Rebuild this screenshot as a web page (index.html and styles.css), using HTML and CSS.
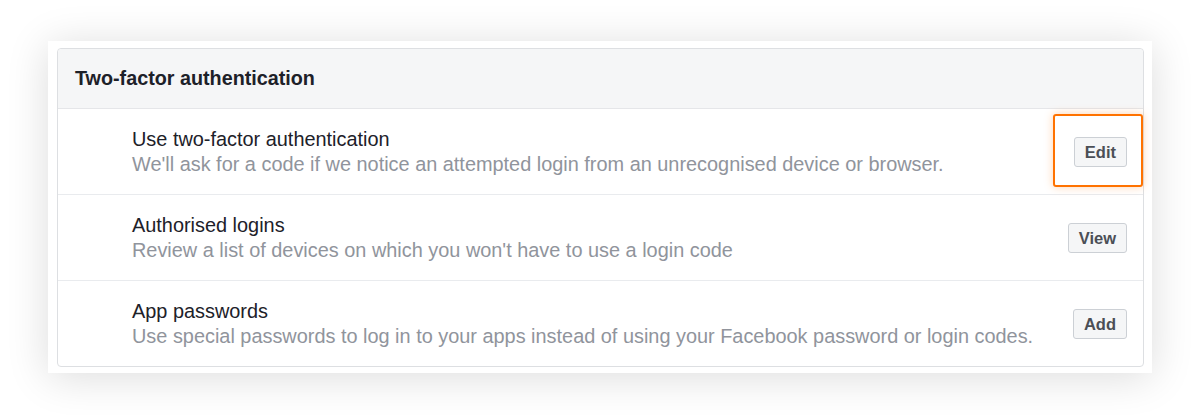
FILE: index.html
```html
<!DOCTYPE html>
<html lang="en">
<head>
<meta charset="utf-8">
<title>Two-factor authentication</title>
<link rel="stylesheet" href="styles.css">
</head>
<body>
<div class="page">
  <div class="card">
    <div class="panel">
      <div class="panel-header">Two-factor authentication</div>
      <div class="row highlighted">
        <div class="text">
          <div class="title">Use two-factor authentication</div>
          <div class="desc">We'll ask for a code if we notice an attempted login from an unrecognised device or browser.</div>
        </div>
        <button class="btn">Edit</button>
        <div class="focus-ring"></div>
      </div>
      <div class="row">
        <div class="text">
          <div class="title">Authorised logins</div>
          <div class="desc">Review a list of devices on which you won't have to use a login code</div>
        </div>
        <button class="btn">View</button>
      </div>
      <div class="row">
        <div class="text">
          <div class="title">App passwords</div>
          <div class="desc">Use special passwords to log in to your apps instead of using your Facebook password or login codes.</div>
        </div>
        <button class="btn">Add</button>
      </div>
    </div>
  </div>
</div>
</body>
</html>
```

FILE: styles.css
```css
* { box-sizing: border-box; }
html, body { margin: 0; padding: 0; background: #ffffff; }
body {
  font-family: "Liberation Sans", Arial, sans-serif;
  width: 1200px;
  height: 415px;
  overflow: hidden;
}
.page {
  padding: 41px 48px 0 48px;
}
.card {
  background: #ffffff;
  padding: 7px 8px 6px 9px;
  box-shadow: 0 4px 40px rgba(0, 0, 0, 0.14);
}
.panel {
  border: 1px solid #dddfe2;
  border-radius: 4px;
  background: #ffffff;
}
.panel-header {
  height: 60px;
  display: flex;
  align-items: center;
  padding-left: 17px;
  background: #f5f6f7;
  border-bottom: 1px solid #e5e6e9;
  border-radius: 4px 4px 0 0;
  font-weight: bold;
  font-size: 19.75px;
  color: #1d2129;
}
.row {
  position: relative;
  display: flex;
  align-items: center;
  justify-content: space-between;
  padding: 18px 16px 17px 74px;
  border-bottom: 1px solid #e9ebee;
}
.row:last-child { border-bottom: none; }
.text { line-height: 25px; font-size: 19.9px; }
.title { color: #1d2129; }
.desc { color: #90949c; }
.btn {
  font-family: "Liberation Sans", Arial, sans-serif;
  font-weight: bold;
  font-size: 16.5px;
  color: #4b4f56;
  background: #f5f6f7;
  border: 1px solid #ccd0d5;
  border-radius: 3px;
  height: 30px;
  padding: 0 10px;
  line-height: 28px;
}
.focus-ring {
  position: absolute;
  top: 5px;
  right: 0px;
  width: 90px;
  height: 73px;
  border: 2px solid #ff7200;
  border-radius: 3px;
  box-shadow: 0 0 8px rgba(255, 130, 30, 0.35);
  pointer-events: none;
}
```
